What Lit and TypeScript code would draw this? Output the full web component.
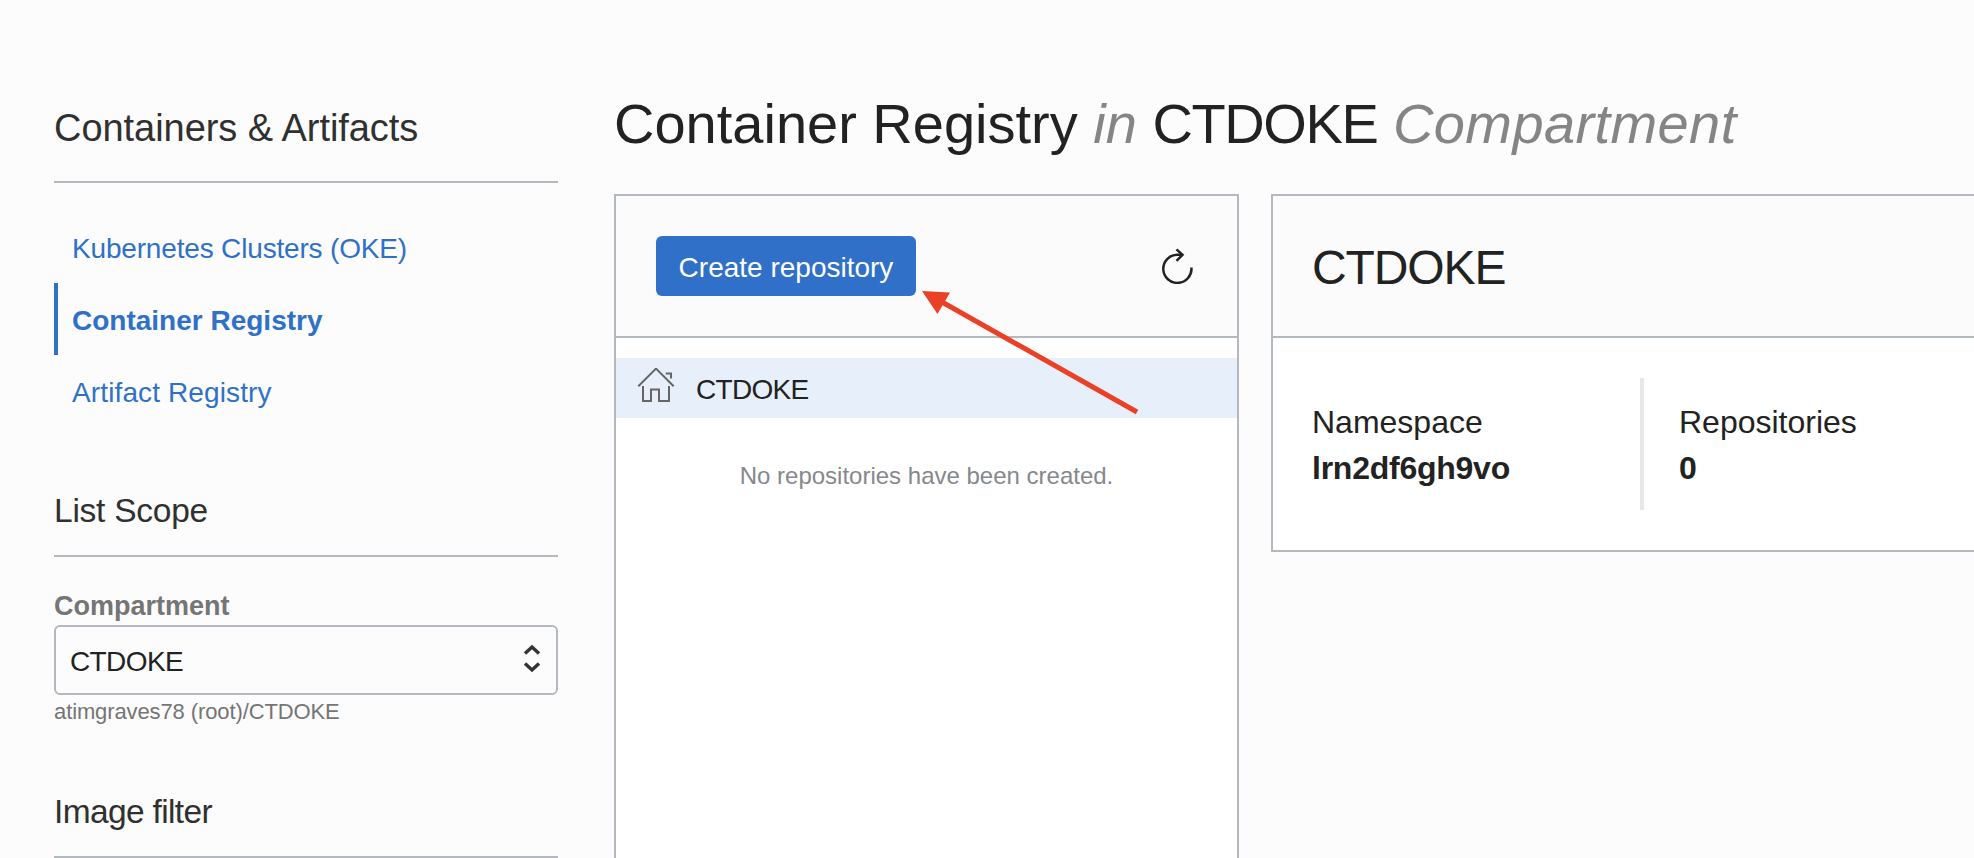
import { LitElement, html, css } from "lit";
import { customElement, property, state } from "lit/decorators.js";
import { classMap } from "lit/directives/class-map.js";

@customElement("side-nav")
class SideNav extends LitElement {
  @state() items = ["Kubernetes Clusters (OKE)", "Container Registry", "Artifact Registry"];
  @state() selected = "Container Registry";

  static styles = css`
    :host { display: block; width: 504px; flex: none; }
    h2, h3 { margin: 0; font-weight: 400; line-height: 40px; border-bottom: 2px solid #b4b9c0; white-space: nowrap; color: #303030; }
    h2 { font-size: 38px; padding-bottom: 33px; letter-spacing: -0.05px; }
    h3 { font-size: 33.5px; padding-bottom: 24px; letter-spacing: -0.25px; }
    .scope { margin-top: 64px; }
    .filter { margin-top: 66px; letter-spacing: -0.65px; }
    nav { display: flex; flex-direction: column; margin-top: 28px; }
    .item { box-sizing: border-box; height: 72px; line-height: 70px; padding: 2px 0 0 14px; border-left: 4px solid transparent; font-size: 28px; color: #2f71c8; text-decoration: none; white-space: nowrap; }
    .item:first-child { letter-spacing: -0.17px; }
    .item:last-child { letter-spacing: 0.12px; }
    .item { line-height: 72px; }
    .active { border-left-color: #2f71c8; font-weight: 700; }
    .label { display: block; margin-top: 33px; line-height: 32px; font-size: 27px; font-weight: 700; color: #757575; }
    .select { box-sizing: border-box; height: 70px; margin-top: 3px; padding: 0 15px 0 14px; border: 2px solid #b4b9c0; border-radius: 6px; display: flex; align-items: center; justify-content: space-between; font-size: 28px; color: #222; }
    .value { padding-top: 4px; letter-spacing: -0.6px; }
    .select svg { display: block; margin-bottom: 4px; }
    .path { margin-top: 3px; line-height: 28px; font-size: 22px; letter-spacing: -0.11px; color: #757575; }
  `;

  render() {
    return html`
      <h2>Containers &amp; Artifacts</h2>
      <nav>
        ${this.items.map((i) => html`<a class=${classMap({ item: true, active: i === this.selected })}>${i}</a>`)}
      </nav>
      <h3 class="scope">List Scope</h3>
      <span class="label">Compartment</span>
      <div class="select">
        <span class="value">CTDOKE</span>
        <svg width="18" height="32" viewBox="0 0 18 32" fill="none" stroke="#333" stroke-width="3.400">
          <path d="M2 11.500 9 5l7 6.500M2 21.500l7 6.500 7-6.500" />
        </svg>
      </div>
      <div class="path">atimgraves78 (root)/CTDOKE</div>
      <h3 class="filter">Image filter</h3>
    `;
  }
}

@customElement("repository-list")
class RepositoryList extends LitElement {
  @property() compartment = "";

  static styles = css`
    :host { box-sizing: border-box; display: flex; flex-direction: column; width: 625px; flex: none; border: 2px solid #b4b9c0; border-bottom: 0; background: #fff; }
    .bar { height: 140px; border-bottom: 2px solid #b4b9c0; background: #fbfbfb; display: flex; align-items: center; justify-content: space-between; padding: 0 44px 0 40px; }
    button { width: 260px; height: 60px; padding: 3px 0 0; border: 0; border-radius: 6px; background: #3070c8; color: #fff; font: 28px "Liberation Sans", Arial, sans-serif; white-space: nowrap; }
    svg { display: block; }
    .row { height: 60px; margin-top: 20px; background: #e7effa; display: flex; align-items: center; gap: 20px; padding-left: 20px; }
    .name { font-size: 28px; padding-top: 3px; letter-spacing: -0.7px; color: #222; }
    .empty { margin-top: 42px; line-height: 32px; text-align: center; font-size: 24px; color: #85888c; }
  `;

  render() {
    return html`
      <div class="bar">
        <button>Create repository</button>
        <svg width="32" height="36" viewBox="0 0 32 36" fill="none" stroke="#222" stroke-width="2.500">
          <path d="M30.400 19.500A14.100 14.100 0 1 1 16.300 6.700H21" />
          <path d="M15.500 1.400 21.500 6.900 15.500 12.800" />
        </svg>
      </div>
      <div class="row">
        <svg width="40" height="40" viewBox="0 0 40 40" fill="none" stroke="#666" stroke-width="2">
          <path d="M2.300 18.200 20 .600 37.700 18.200" />
          <path d="M29.700 5.500H35v5M7 18v15h8V21.500h8V33h10V18" />
        </svg>
        <span class="name">${this.compartment}</span>
      </div>
      <div class="empty">No repositories have been created.</div>
    `;
  }
}

@customElement("compartment-summary")
class CompartmentSummary extends LitElement {
  @property() compartment = "";

  static styles = css`
    :host { box-sizing: border-box; display: block; flex: 1; height: 358px; border: 2px solid #b4b9c0; border-right: 0; background: #fff; color: #222; }
    h2 { margin: 0; height: 136px; line-height: 136px; padding: 4px 0 0 39px; border-bottom: 2px solid #b4b9c0; background: #fbfbfb; font-size: 48px; font-weight: 400; letter-spacing: -1.1px; }
    .facts { display: flex; margin-top: 40px; height: 132px; }
    .fact { box-sizing: border-box; padding-top: 21px; line-height: 46px; font-size: 32px; white-space: nowrap; }
    .first { width: 367px; padding-left: 39px; }
    .next { border-left: 4px solid #e6e8ea; padding-left: 35px; }
    .strong { font-weight: 700; letter-spacing: -0.25px; }
  `;

  render() {
    return html`
      <h2>${this.compartment}</h2>
      <div class="facts">
        <div class="fact first"><div>Namespace</div><div class="strong">lrn2df6gh9vo</div></div>
        <div class="fact next"><div>Repositories</div><div class="strong">0</div></div>
      </div>
    `;
  }
}

@customElement("app-root")
class AppRoot extends LitElement {
  @state() compartment = "CTDOKE";

  static styles = css`
    :host { box-sizing: border-box; position: relative; display: flex; gap: 56px; width: 100%; height: 858px; padding-left: 54px; overflow: hidden; background: #fcfcfc; font-family: "Liberation Sans", Arial, sans-serif; }
    side-nav { margin-top: 108px; }
    main { flex: 1; min-width: 0; display: flex; flex-direction: column; padding-top: 92px; }
    h1 { margin: 0 0 38px; line-height: 64px; font-size: 56px; font-weight: 400; white-space: nowrap; color: #222; }
    em { color: #858585; }
    .comp { letter-spacing: -1.4px; }
    .kind { letter-spacing: 0.4px; }
    .panels { flex: 1; display: flex; align-items: stretch; gap: 32px; }
    compartment-summary { align-self: flex-start; }
    .pointer { position: absolute; left: 920px; top: 288px; }
  `;

  render() {
    return html`
      <side-nav></side-nav>
      <main>
        <h1>Container Registry <em>in</em> <span class="comp">${this.compartment}</span> <em class="kind">Compartment</em></h1>
        <div class="panels">
          <repository-list .compartment=${this.compartment}></repository-list>
          <compartment-summary .compartment=${this.compartment}></compartment-summary>
        </div>
      </main>
      <svg class="pointer" width="224" height="130" viewBox="0 0 224 130">
        <path d="M22 14 217 124" stroke="#eb4026" stroke-width="5" />
        <path d="M2 3 30 4.500 17.500 26Z" fill="#eb4026" />
      </svg>
    `;
  }
}
